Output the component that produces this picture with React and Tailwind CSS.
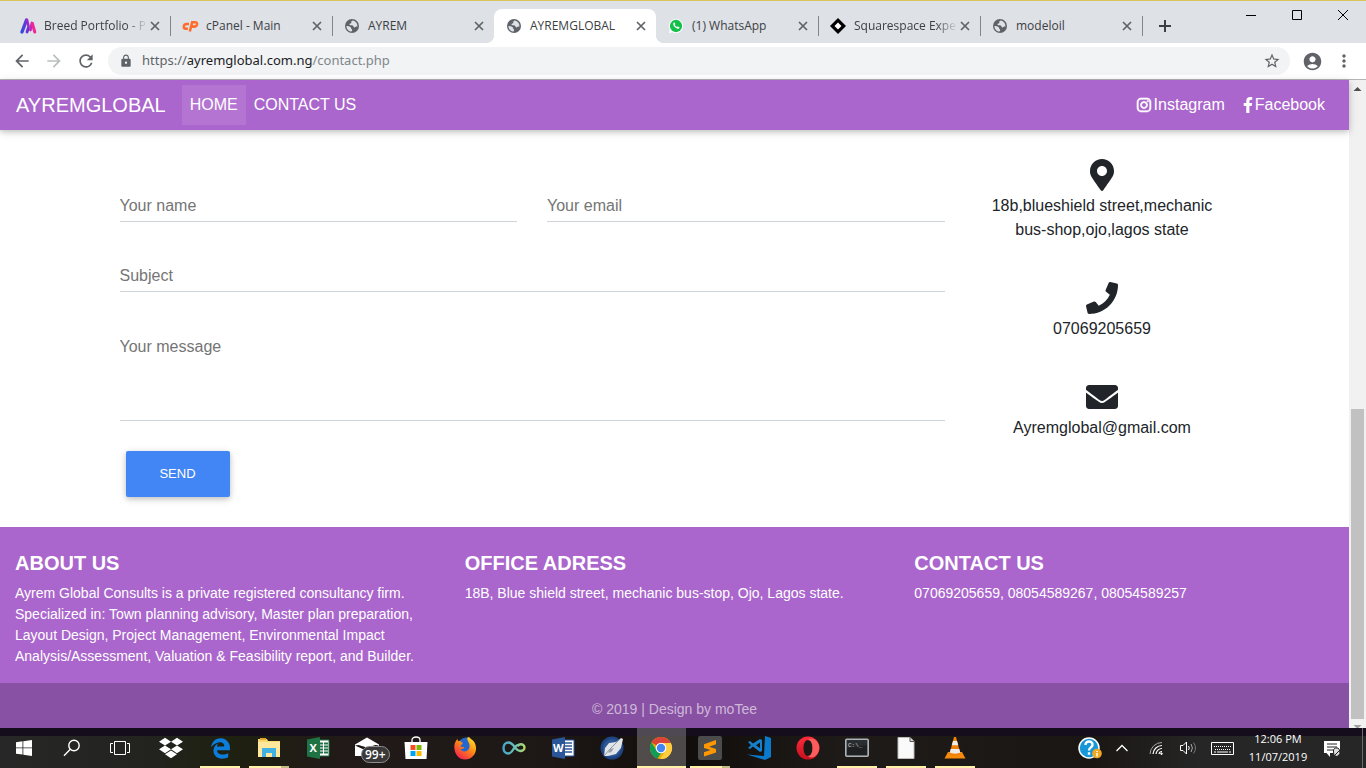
import React from 'react';
import {
  MdArrowBack, MdArrowForward, MdRefresh, MdLock, MdStarBorder,
  MdAccountCircle, MdMoreVert,
} from 'react-icons/md';
import { FaInstagram, FaFacebookF, FaMapMarkerAlt, FaPhone, FaEnvelope, FaDropbox } from 'react-icons/fa';
import { FaEdgeLegacy } from 'react-icons/fa6';

const Globe = () => (
  <svg viewBox="0 0 16 16" className="size-4">
    <circle cx="8" cy="8" r="7" fill="#5f6368" />
    <path d="M8.800 2.600c-1.200.2-1.700 1-1.500 1.900.2.700-.5 1.100-1.400 1.300-1 .3-.4 1.500.7 1.500 1.700 0 2.700.3 3 1.400.2 1 1.300.8 1.900.2.500-.5 1.100-.5 2-.3C13.500 5.500 11.700 3.200 8.800 2.600z" fill="#dee1e6" />
    <path d="M2.500 7.900c1.600.1 3.500.4 4.200 1.300.6.7.1 1.400.9 1.700.9.300.6 1.800-.2 2.700C4.500 13.300 2.300 10.900 2.500 7.900z" fill="#dee1e6" />
  </svg>
);

const BreedIcon = () => (
  <svg viewBox="0 0 18 18" className="size-[18px]" strokeLinecap="round" fill="none">
    <defs>
      <linearGradient id="breed" x1="1" x2="9" y1="0" y2="0" gradientUnits="userSpaceOnUse">
        <stop offset="0" stopColor="#2b4fe0" />
        <stop offset="1" stopColor="#8a2bd0" />
      </linearGradient>
    </defs>
    <path d="M2 15L6.500 3" stroke="url(#breed)" strokeWidth="3.400" />
    <path d="M7 15L8.500 10.500" stroke="#6a2fd6" strokeWidth="2.800" />
    <path d="M7 3L8.500 9" stroke="#9a2bcb" strokeWidth="2.600" />
    <path d="M12 6l-1.600 7" stroke="#c426b8" strokeWidth="2.800" />
    <path d="M12.300 6.500L14.800 15" stroke="#f0249b" strokeWidth="3" />
  </svg>
);

const CpanelIcon = () => (
  <svg viewBox="0 0 17 16" className="h-4 w-[17px]" fill="none" stroke="#ff6c2c" strokeWidth="2.600">
    <path d="M7 6H4.500C2.800 6 1.900 7.300 1.800 8.700c0 1.200.8 2 2 2h2.100" />
    <path d="M7.800 13.500L10.200 4.200h3c1.400 0 2 .9 1.800 2.100-.3 1.500-1.300 2.300-2.700 2.300h-2" />
  </svg>
);

const WhatsAppIcon = () => (
  <svg viewBox="0 0 18 18" className="size-4">
    <path d="M9 1a8 8 0 0 0-7 12L1 17l4.100-1A8 8 0 1 0 9 1z" fill="#fff" />
    <circle cx="9" cy="9" r="6.900" fill="#12c04a" />
    <path d="M6.500 5.200c.5-.4.9-.2 1.100.2l.6 1.300c.1.400-.4.8-.6 1.100.6 1.100 1.400 1.900 2.500 2.400.3-.2.700-.9 1.100-.7l1.400.7c.5.3.2 1.200-.2 1.600-2.300 1.900-8.400-3.700-5.900-6.600z" fill="#fff" />
  </svg>
);

const SquarespaceIcon = () => (
  <svg viewBox="0 0 16 16" className="size-4">
    <path d="M8 0l8 8-8 8-8-8z" fill="#000" />
    <path d="M8 4.500L11.500 8 8 11.500 4.500 8z" fill="#fff" />
  </svg>
);

const tabs = [
  { title: 'Breed Portfolio - P', icon: <BreedIcon />, fade: true, line: true },
  { title: 'cPanel - Main', icon: <CpanelIcon />, line: true },
  { title: 'AYREM', icon: <Globe /> },
  { title: 'AYREMGLOBAL', icon: <Globe />, active: true },
  { title: '(1) WhatsApp', icon: <WhatsAppIcon />, line: true },
  { title: 'Squarespace Exper', icon: <SquarespaceIcon />, fade: true, line: true },
  { title: 'modeloil', icon: <Globe />, line: true },
];

function Tab({ title, icon, fade, line, active }) {
  return (
    <div className={`relative flex h-[34px] w-[162px] min-w-0 items-center pl-3 ${active ? 'rounded-t-lg bg-white' : ''}`}>
      {active && (
        <>
          <span className="absolute bottom-0 -left-2 size-2 bg-[radial-gradient(circle_at_top_left,#dee1e6_8px,#fff_8px)]" />
          <span className="absolute -right-2 bottom-0 size-2 bg-[radial-gradient(circle_at_top_right,#dee1e6_8px,#fff_8px)]" />
        </>
      )}
      <span className="flex w-6 shrink-0 items-center">{icon}</span>
      <a
        href="#tab"
        className={`w-[102px] shrink-0 text-xs whitespace-nowrap text-[#3c4043] ${fade ? '[mask-image:linear-gradient(to_right,#000_80%,transparent_102%)]' : ''}`}
      >
        {title}
      </a>
      <button aria-label={`Close ${title}`} className="ml-0.5 text-[#5f6368]">
        <svg viewBox="0 0 14 14" className="size-3.5" stroke="currentColor" strokeWidth="1.700"><path d="M3 3l8 8M11 3l-8 8" /></svg>
      </button>
      {line && <span className="absolute top-[7px] -right-px h-5 w-px bg-[#80868b]" />}
    </div>
  );
}

function BrowserChrome() {
  return (
    <header className="font-['Open_Sans',sans-serif]">
      <div className="flex h-[43px] items-end border-t border-[#d8c65c] bg-[#dee1e6] pl-2">
        {tabs.map((t) => <Tab key={t.title} {...t} />)}
        <button aria-label="New tab" className="mb-2 ml-3.5 flex items-center justify-center text-[#3c4043]">
          <svg viewBox="0 0 18 18" className="size-[18px]" stroke="currentColor" strokeWidth="2"><path d="M9 3v12M3 9h12" /></svg>
        </button>
        <div className="ml-auto flex self-start">
          <button aria-label="Minimize" className="flex h-7 w-[46px] items-center justify-center">
            <svg viewBox="0 0 10 10" className="size-2.5"><path d="M0 5.500h10" stroke="#000" /></svg>
          </button>
          <button aria-label="Maximize" className="flex h-7 w-[46px] items-center justify-center">
            <svg viewBox="0 0 10 10" className="size-2.5"><path d="M.5.5h9v9h-9z" fill="none" stroke="#000" /></svg>
          </button>
          <button aria-label="Close" className="flex h-7 w-[46px] items-center justify-center">
            <svg viewBox="0 0 10 10" className="size-2.5"><path d="M0 0l10 10M10 0L0 10" stroke="#000" /></svg>
          </button>
        </div>
      </div>
      <div className="flex h-[37px] items-center border-b border-[#b6b4b6] bg-white px-1.5 text-[#5f6368]">
        <button aria-label="Back" className="flex w-8 justify-center"><MdArrowBack className="size-5" /></button>
        <button aria-label="Forward" className="flex w-8 justify-center text-[#bbbdbf]"><MdArrowForward className="size-5" /></button>
        <button aria-label="Reload" className="flex w-8 justify-center"><MdRefresh className="size-5" /></button>
        <div className="mx-1.5 flex h-7 flex-1 items-center rounded-full bg-[#f1f3f4] pr-[9px] pl-[11px]">
          <MdLock className="size-3.5" />
          <a href="#address" className="ml-[9px] font-['Noto_Sans',sans-serif] text-[13px] text-[#80868b]">
            <span className="text-[#5f6368]">https://</span>
            <span className="text-[#202124]">ayremglobal.com.ng</span>/contact.php
          </a>
          <button aria-label="Bookmark" className="ml-auto"><MdStarBorder className="size-[18px]" /></button>
        </div>
        <button aria-label="Profile" className="flex w-8 justify-center"><MdAccountCircle className="size-[21px]" /></button>
        <button aria-label="Menu" className="flex w-8 justify-center"><MdMoreVert className="size-5" /></button>
      </div>
    </header>
  );
}

function Navbar() {
  return (
    <nav className="relative flex h-[50px] items-center bg-[#aa66cc] pr-6 pl-4 text-white shadow-[0_2px_5px_0_rgba(0,0,0,.16),0_2px_10px_0_rgba(0,0,0,.12)]">
      <a href="#top" className="mr-4 text-xl">AYREMGLOBAL</a>
      <a href="#home" className="bg-white/10 p-2">HOME</a>
      <a href="#contact" className="p-2">CONTACT US</a>
      <a href="#instagram" className="ml-auto flex items-center gap-0.5 pr-[18px]">
        <FaInstagram className="size-4" stroke="currentColor" strokeWidth="20" />Instagram
      </a>
      <a href="#facebook" className="flex items-center gap-0.5">
        <FaFacebookF className="h-4 w-2.5" />Facebook
      </a>
    </nav>
  );
}

const field = 'block w-full border-b border-[#ced4da] bg-transparent outline-none placeholder:text-[#757575]';

const details = [
  { Icon: FaMapMarkerAlt, text: '18b,blueshield street,mechanic bus-shop,ojo,lagos state' },
  { Icon: FaPhone, text: '07069205659' },
  { Icon: FaEnvelope, text: 'Ayremglobal@gmail.com' },
];

function Contact() {
  return (
    <main className="bg-white pb-[30px] text-[#212529]">
      <div className="mx-auto grid max-w-[1140px] grid-cols-[3fr_1fr]">
        <form className="px-[15px] pt-[60px]">
          <div className="grid grid-cols-2 gap-[30px]">
            <input aria-label="Your name" placeholder="Your name" className={`h-8 ${field}`} />
            <input aria-label="Your email" placeholder="Your email" type="email" className={`h-8 ${field}`} />
          </div>
          <input aria-label="Subject" placeholder="Subject" className={`mt-[38px] h-8 ${field}`} />
          <textarea aria-label="Your message" placeholder="Your message" className={`mt-[38px] h-[91px] resize-none pt-[5px] ${field}`} />
          <button type="button" className="mt-[30px] ml-1.5 h-[46px] w-[104px] rounded-xs bg-[#4285f4] text-[13px] text-white shadow-[0_2px_5px_0_rgba(0,0,0,.16),0_2px_10px_0_rgba(0,0,0,.12)]">
            SEND
          </button>
        </form>
        <ul className="flex flex-col gap-10 px-[15px] pt-[29px] text-center">
          {details.map(({ Icon, text }) => (
            <li key={text}>
              <Icon className="mx-auto mb-[3px] size-8" />
              <p className="px-4">{text}</p>
            </li>
          ))}
        </ul>
      </div>
    </main>
  );
}

const columns = [
  ['ABOUT US', 'Ayrem Global Consults is a private registered consultancy firm. Specialized in: Town planning advisory, Master plan preparation, Layout Design, Project Management, Environmental Impact Analysis/Assessment, Valuation & Feasibility report, and Builder.'],
  ['OFFICE ADRESS', '18B, Blue shield street, mechanic bus-stop, Ojo, Lagos state.'],
  ['CONTACT US', '07069205659, 08054589267, 08054589257'],
];

function Footer() {
  return (
    <footer className="flex flex-1 flex-col bg-[#aa66cc] text-sm leading-[21px] text-white">
      <div className="grid grid-cols-3 pt-6 pb-4">
        {columns.map(([title, text]) => (
          <section key={title} className="px-[15px]">
            <h5 className="mb-2 text-xl leading-6 font-bold">{title}</h5>
            <p>{text}</p>
          </section>
        ))}
      </div>
      <p className="flex-1 bg-black/20 pt-4 pb-2 text-center text-white/60">© 2019 | Design by moTee</p>
    </footer>
  );
}

function Scrollbar() {
  return (
    <div className="flex w-[17px] flex-col items-center bg-[#f1f1f1]" aria-hidden="true">
      <svg viewBox="0 0 17 17" className="size-[17px]"><path d="M4.500 11l4-4 4 4z" fill="#505050" /></svg>
      <div className="grow-[312]" />
      <div className="w-[13px] grow-[310] bg-[#c1c1c1]" />
      <svg viewBox="0 0 17 9" className="h-[9px] w-[17px]"><path d="M4.500 6h8l-4 4z" fill="#a0a0a0" /></svg>
    </div>
  );
}

const Svg = ({ children, className = 'size-6' }) => (
  <svg viewBox="0 0 24 24" className={className} fill="none">{children}</svg>
);

const WindowsLogo = () => (
  <svg viewBox="0 0 16 16" className="size-4" fill="#fff">
    <path d="M0 2.200l6.500-.9v6.200H0zM7.300 1.200L16 0v7.500H7.300zM0 8.300h6.500v6.300L0 13.700zM7.300 8.300H16V16l-8.700-1.200z" />
  </svg>
);
const SearchIcon = () => (
  <svg viewBox="0 0 18 18" className="size-[18px]" fill="none" stroke="#fff" strokeWidth="1.400">
    <circle cx="11" cy="6.500" r="5.200" /><path d="M7.300 10.200L1 16.700" />
  </svg>
);
const TaskViewIcon = () => (
  <svg viewBox="0 0 20 16" className="h-4 w-5" fill="none" stroke="#fff">
    <path d="M4.500 1.500h11v13h-11zM3 3.500H.5v9H3M17 3.500h2.500v9H17" />
  </svg>
);
const ExplorerIcon = () => (
  <Svg>
    <path d="M1 4V3h9l1 2h12v16H1z" fill="#f7d774" /><path d="M3 3h6" stroke="#e0a92e" strokeWidth="2" />
    <path d="M1 6h22v15H1z" fill="#ffe79b" />
    <path d="M5 12h14v9h-4v-4H9v4H5z" fill="#3fb1e5" />
  </Svg>
);
const OfficeIcon = ({ letter, dark, word }) => (
  <Svg>
    <path d="M12 4h11v16H12z" fill="#fff" stroke={dark} strokeWidth="1" />
    {word
      ? <path d="M14 7h7M14 10h7M14 13h7M14 16h7" stroke={dark} strokeWidth="1.300" />
      : <path d="M14 7.500h3m1 0h4M14 10.500h3m1 0h4M14 13.500h3m1 0h4M14 16.500h3m1 0h4" stroke={dark} strokeWidth="2" />}
    <path d="M1 3.500L14 1v22L1 20.500z" fill={dark} />
    <text x="7.200" y="16" textAnchor="middle" fontSize="11" fontWeight="700" fill="#fff" fontFamily="Open Sans">{letter}</text>
  </Svg>
);
const MailIcon = () => (
  <span className="relative flex">
    <Svg>
      <path d="M0 8.500L12 1.500l12 7V20H0z" fill="#fff" />
      <path d="M0 9.500l3.500-.5L12 11.500 20.500 9l3.500.5L12 15z" fill="#1b1715" />
    </Svg>
    <span className="absolute top-2.5 left-1.5 rounded-full border border-[#8d8d8d] bg-[#3a3838] px-[3px] text-xs leading-[15px] font-semibold text-white">99+</span>
  </span>
);
const StoreIcon = () => (
  <Svg>
    <path d="M8 7V4c0-4 8-4 8 0v3" stroke="#fff" strokeWidth="1.300" />
    <path d="M.5 6h23l-1 17h-21z" fill="#fff" />
    <path d="M6.500 9h5v5h-5z" fill="#f25022" /><path d="M12.500 9h5v5h-5z" fill="#7fba00" />
    <path d="M6.500 15h5v5h-5z" fill="#00a4ef" /><path d="M12.500 15h5v5h-5z" fill="#ffb900" />
  </Svg>
);
const FirefoxIcon = () => (
  <Svg>
    <defs>
      <linearGradient id="fx" x1="20" y1="2" x2="5" y2="22" gradientUnits="userSpaceOnUse">
        <stop stopColor="#ffe226" /><stop offset=".45" stopColor="#ff8a16" /><stop offset="1" stopColor="#f5204f" />
      </linearGradient>
    </defs>
    <path d="M1.500 13C.5 8 3 4.500 4.300 3c.2 1 .6 1.700 1.200 2.200L16 1c1 2 4.300 3 5.500 5.500C26 15 20 23.500 12 23.500 6 23.500 2 18.500 1.500 13z" fill="url(#fx)" />
    <path d="M7 4.500C9 2 12 1 14.500 1.500c-1 2.500 1.500 4 2 7.500.5 3.500-1.500 6.500-5 6.500-2 0-3.500-1-4-2.500 2 .5 3-.5 4-1.500-1-.8-2.500 0-3.500-.7-.7-.5-.3-1.600.8-2.300 1-.7 1-1.500.5-2C8.500 6.500 8 6 7 4.500z" fill="#2468cf" />
  </Svg>
);
const InfinityIcon = () => (
  <Svg>
    <defs><linearGradient id="inf"><stop stopColor="#43a7c9" /><stop offset=".6" stopColor="#6fc5b4" /><stop offset="1" stopColor="#b2d765" /></linearGradient></defs>
    <path d="M16.500 9.500c-1.300-1.200-3.300 1-5 3.500-1.500 2.500-3 4.500-5.200 4.500C3.300 17.500 1.500 15 1.500 12s2-5.500 5-5.500c3.500 0 5 3 7 5.500 1.500 2 2.700 3 4.700 3 2.300 0 4.300-1.400 4.300-3.400s-1.700-3.300-3.700-3.300c-1.500 0-2.500.8-3.500 2" stroke="url(#inf)" strokeWidth="2.400" />
  </Svg>
);
const FeatherIcon = () => (
  <Svg>
    <circle cx="12" cy="12" r="11.500" fill="#1f4482" /><circle cx="12" cy="12" r="9" fill="#2d5796" />
    <path d="M4 20l1-8 4-5 7-1 5-4 2 1-2 9-5 6-8 2z" fill="#e3e6e8" />
    <path d="M4 20l6-7 11-11" stroke="#77818c" strokeWidth=".8" /><path d="M10 13l4-1-3 4.500H8z" fill="#98a3ac" />
  </Svg>
);
const ChromeIcon = () => (
  <Svg>
    <circle cx="12" cy="12" r="11" fill="#e8ae00" />
    <path d="M12 12L2.500 6.500A11 11 0 0 1 21.500 6.500z" fill="#db4437" />
    <path d="M2.500 6.500L8 15l4 2-3.500 5.500A11 11 0 0 1 2.500 6.500z" fill="#0f9d58" />
    <path d="M12 7h9.800A11 11 0 0 1 11 23l5.500-8.500z" fill="#ffcd40" />
    <circle cx="12" cy="12" r="5.300" fill="#fff" /><circle cx="12" cy="12" r="4.200" fill="#4285f4" />
  </Svg>
);
const SublimeIcon = () => (
  <Svg>
    <rect width="24" height="24" rx="2" fill="#4b4b4b" />
    <path d="M6 8.200L18 4v4.200l-7 2.500 7 2.200v3.700L6 20.500v-4.200l6.500-2.300L6 12z" fill="#ff9800" />
  </Svg>
);
const VsCodeIcon = () => (
  <Svg>
    <path d="M18 0l6 2v19l-6 3L0 18.500l17 1.500z" fill="#0a7bcc" />
    <path d="M13 3l2 1v11l-2 1-7-5.500L3 13l-2-1 3-2.800L1 6l2-1 3 2.500zM13 6.500L9 9.300l4 3z" fillRule="evenodd" fill="#1580cb" />
  </Svg>
);
const OperaIcon = () => (
  <Svg>
    <defs><linearGradient id="op" x2="0" y2="1"><stop stopColor="#ff2b3d" /><stop offset="1" stopColor="#c5101e" /></linearGradient></defs>
    <path fillRule="evenodd" d="M12 .5a11.500 11.500 0 1 0 0 23 11.500 11.500 0 0 0 0-23zM12 4c2.800 0 4.500 3.500 4.500 8s-1.700 8-4.500 8-4.500-3.500-4.500-8S9.200 4 12 4z" fill="url(#op)" />
    <path d="M12 4c2.800 0 4.500 3.500 4.500 8s-1.700 8-4.500 8c2 2 5 2 7.500 0 5-4.500 5-11.500 0-16-2.500-2-5.500-2-7.500 0z" fill="#f95d5d" />
  </Svg>
);
const TerminalIcon = () => (
  <Svg>
    <rect x=".8" y="3.300" width="22.400" height="17" rx="1" fill="#2b2e30" stroke="#aeb3b7" strokeWidth="1.600" />
    <path d="M2 12l20-3v10H2z" fill="#1e2022" />
    <text x="3" y="10.500" fontSize="6" fill="#c9c9c9" fontFamily="Liberation Mono">C:\_</text>
  </Svg>
);
const FileIcon = () => (
  <Svg><path d="M4 1.500h12l4 4V22.500H4z" fill="#fafafa" stroke="#bbb" /><path d="M16 1.500v4h4" fill="#ddd" stroke="#555" /></Svg>
);
const VlcIcon = () => (
  <Svg>
    <path d="M5 16h14l3.500 6.500h-21z" fill="#f58a0c" /><path d="M11 1h2l4.500 17c-2 2-9 2-11 0z" fill="#f0820a" />
    <path d="M10 5h4l1.300 4.300H8.700zM7.700 13h8.600l1 3.500c-2.500 1.500-8 1.500-10.500 0z" fill="#ececec" />
  </Svg>
);

const pinned = [
  { name: 'Dropbox', icon: <FaDropbox className="size-6 text-white" /> },
  { name: 'Edge', icon: <FaEdgeLegacy className="size-[21px] text-[#0d7ddb]" />, open: true },
  { name: 'File Explorer', icon: <ExplorerIcon />, open: true, many: true },
  { name: 'Excel', icon: <OfficeIcon letter="X" dark="#1f7244" /> },
  { name: 'Mail', icon: <MailIcon /> },
  { name: 'Store', icon: <StoreIcon /> },
  { name: 'Firefox', icon: <FirefoxIcon /> },
  { name: 'Infinity', icon: <InfinityIcon /> },
  { name: 'Word', icon: <OfficeIcon letter="W" dark="#2a5699" word /> },
  { name: 'Feather', icon: <FeatherIcon /> },
  { name: 'Chrome', icon: <ChromeIcon />, current: true },
  { name: 'Sublime Text', icon: <SublimeIcon />, open: true, many: true },
  { name: 'Visual Studio Code', icon: <VsCodeIcon /> },
  { name: 'Opera', icon: <OperaIcon /> },
  { name: 'Command Prompt', icon: <TerminalIcon />, open: true },
  { name: 'Document', icon: <FileIcon />, open: true },
  { name: 'VLC', icon: <VlcIcon />, open: true },
];

function Taskbar() {
  return (
    <div className="flex h-10 items-stretch bg-[linear-gradient(to_bottom,#150d1b_8px,transparent_8px),linear-gradient(to_right,#272727,#232420_10%,#1e2010_17%,#211a18_25%,#1d1816_40%,#110d0b_50%,#1f1b19_62%,#1a1614_80%,#262626_88%)] font-['Open_Sans',sans-serif] text-white">
      <button aria-label="Start" className="flex w-12 items-center justify-center"><WindowsLogo /></button>
      <button aria-label="Search" className="flex w-12 items-center justify-center"><SearchIcon /></button>
      <button aria-label="Task view" className="mr-[3px] flex w-12 items-center justify-center"><TaskViewIcon /></button>
      {pinned.map(({ name, icon, open, many, current }) => (
        <button key={name} aria-label={name} className={`relative flex w-[49px] items-center justify-center pr-px ${current ? 'bg-white/25' : ''}`}>
          {icon}
          {current && <span className="absolute inset-x-0 bottom-0 h-0.5 bg-[#fff2a8]" />}
          {open && <span className={`absolute bottom-0 left-1 h-0.5 w-10 bg-[#fff2a8] ${many ? 'border-r-8 border-[#c2bb84]' : ''}`} />}
        </button>
      ))}
      <div className="ml-auto flex items-center">
        <button aria-label="Help" className="flex w-8 justify-center">
          <Svg>
            <circle cx="11" cy="12" r="10" fill="#1597d8" stroke="#fff" strokeWidth="1.500" />
            <path d="M7.500 9c0-5 7.500-4.500 7 0-.3 2.500-3.500 2.500-3.500 5.500M11 16.300v2.400" stroke="#fff" strokeWidth="2.400" />
            <circle cx="19" cy="17.500" r="4.800" fill="#f2a922" /><path d="M19 15v1m0 1v3.500" stroke="#fff" strokeWidth="1.400" />
          </Svg>
        </button>
        <button aria-label="Show hidden icons" className="flex w-8 justify-center">
          <svg viewBox="0 0 12 8" className="h-2 w-3" fill="none" stroke="#fff" strokeWidth="1.300"><path d="M.5 7L6 1.500 11.500 7" /></svg>
        </button>
        <button aria-label="Network" className="flex w-9 justify-center">
          <svg viewBox="0 0 14 14" className="size-3.5" fill="none" stroke="#fff">
            <path d="M1 13A12 12 0 0 1 13 1.500" stroke="#aaa" /><path d="M4 13a9 9 0 0 1 9-8.500M7 13a6 6 0 0 1 6-5.500M10 13a3 3 0 0 1 3-2.500" strokeWidth="1.200" /><circle cx="12.500" cy="12.700" r=".8" fill="#fff" />
          </svg>
        </button>
        <button aria-label="Volume" className="flex w-7 justify-center">
          <svg viewBox="0 0 17 14" className="h-3.5 w-[17px]" fill="none" stroke="#fff">
            <path d="M.5 4.500h2.500l3.500-3.500v12L3 9.500H.5zM8.500 5q1.500 2 0 4" /><path d="M11 3q2.800 4 0 8" stroke="#aaa" /><path d="M13.500 1.500q4 5.500 0 11" stroke="#777" />
          </svg>
        </button>
        <button aria-label="Keyboard" className="flex w-10 justify-center">
          <svg viewBox="0 0 23 13" className="h-[13px] w-[23px]" fill="none" stroke="#fff">
            <path d="M.5.5h22v12H.5z" /><path d="M3 4.500h17M4 7.500h15" strokeDasharray="1 1" /><path d="M3 10h2m1 0h11m1 0h2" />
          </svg>
        </button>
        <p className="w-[72px] text-center text-[11px] leading-[18px]">12:06 PM<br />11/07/2019</p>
        <button aria-label="Notifications" className="mr-3 flex w-9 justify-center">
          <svg viewBox="0 0 17 17" className="size-[17px]">
            <path d="M0 1h16v12H6v4l-3.500-4H0z" fill="#fff" /><path d="M3 4h10M3 7h10M3 10h6" stroke="#222" />
            <path d="M9.500 12a3 3 0 0 1 6-2l.5 4-3 2.500-3-1z" fill="#ddd" stroke="#222" /><path d="M10 16l6-6" stroke="#222" />
          </svg>
        </button>
        <span className="mr-[3px] h-10 w-px bg-[#6b6b6b]" />
      </div>
    </div>
  );
}

export default function App() {
  return (
    <div className="flex min-h-screen flex-col">
      <BrowserChrome />
      <div className="flex flex-1 font-['Liberation_Sans',Arial,sans-serif] text-base">
        <div className="flex flex-1 flex-col">
          <Navbar />
          <Contact />
          <Footer />
        </div>
        <Scrollbar />
      </div>
      <Taskbar />
    </div>
  );
}
